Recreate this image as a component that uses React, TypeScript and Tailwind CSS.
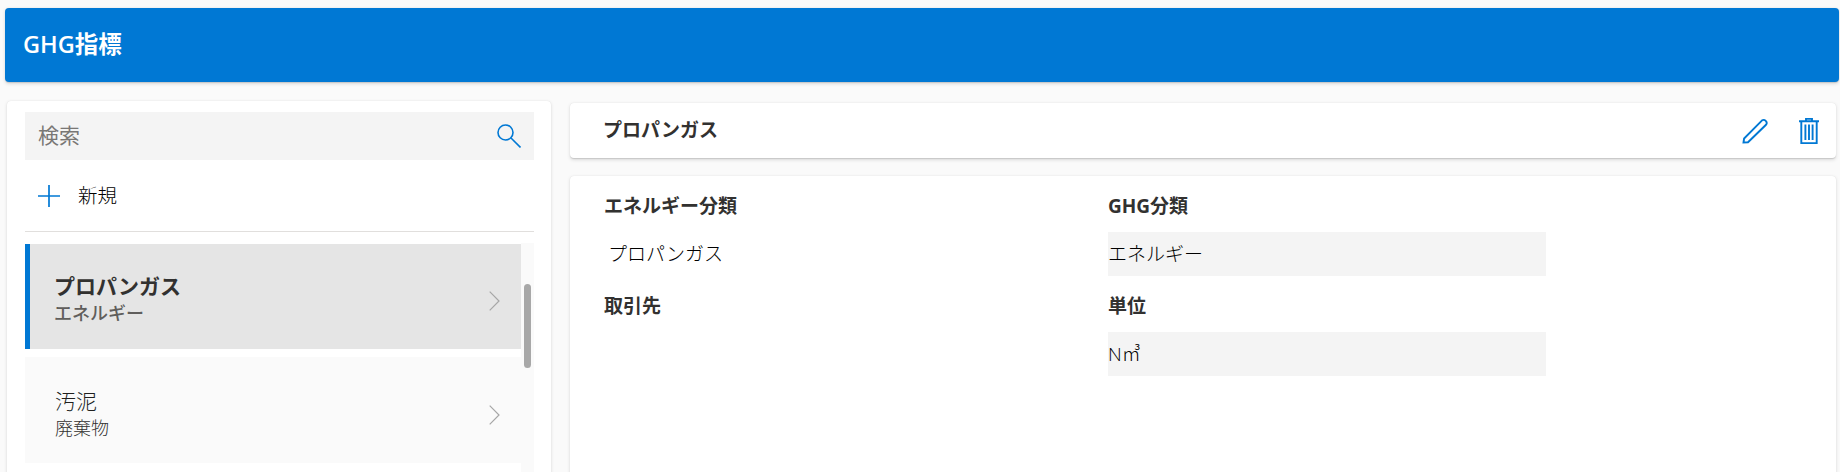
export default function App() {
  const font = { fontFamily: '"Open Sans","Noto Sans CJK JP",sans-serif' };
  const depth = "shadow-[0_1.6px_3.6px_rgba(0,0,0,0.13),0_0.3px_0.9px_rgba(0,0,0,0.11)]";
  return (
    <div style={font} className="h-[472px] w-[1840px] overflow-hidden bg-[#fafafa] pt-2 text-[#323130]">
      <header className={`ml-[5px] mr-px flex h-[74px] items-center rounded bg-[#0078d4] pl-[18px] text-[23.5px] font-semibold text-white ${depth}`}>
        GHG指標
      </header>
      <div className="flex">
        <aside className={`ml-[7px] mt-[19px] h-[500px] w-[544px] shrink-0 rounded bg-white pl-[18px] pr-[17px] pt-[11px] ${depth}`}>
          <div className="flex h-12 items-center justify-between bg-[#f4f4f4] pl-[13px] pr-[13px]">
            <span className="text-[21px] font-normal text-[#797775]">検索</span>
            <svg width="24" height="24" viewBox="0 0 24 24" fill="none" stroke="#0078d4" strokeWidth="1.6">
              <circle cx="8.5" cy="8.5" r="7.5" />
              <path d="M14 14l9.5 9.5" />
            </svg>
          </div>
          <div className="flex h-[72px] items-center border-b border-[#e1dfdd] pl-[13px]">
            <svg width="22" height="22" viewBox="0 0 22 22" fill="none" stroke="#0078d4" strokeWidth="1.7">
              <path d="M11 0v22M0 11h22" />
            </svg>
            <span className="ml-[18px] text-[19.5px] font-light text-[#000000]">新規</span>
          </div>
          <div className="mt-[11px] flex">
            <div className="w-[496px] shrink-0 pt-px">
              <div className="flex h-[105px] items-center justify-between border-l-[5px] border-[#0078d4] bg-[#e5e5e5] pl-[24px] pr-[21px] pt-[9px]">
                <div className="mb-[4px]">
                  <div className="text-[21px] font-semibold leading-[29px] text-[#323130]">プロパンガス</div>
                  <div className="text-[18px] font-medium leading-[25px] text-[#605e5c]">エネルギー</div>
                </div>
                <Chevron />
              </div>
              <div className="mt-2 flex h-[106px] items-center justify-between bg-[#fafafa] pl-[30px] pr-[21px] pt-[10px]">
                <div className="mb-[3px]">
                  <div className="text-[21px] font-light leading-[29px] text-[#201f1e]">汚泥</div>
                  <div className="text-[18px] font-light leading-[25px] text-[#323130]">廃棄物</div>
                </div>
                <Chevron />
              </div>
            </div>
            <div className="h-[300px] w-[13px] shrink-0 bg-[#fafafa] pl-[3px] pt-[41px]">
              <div className="h-[84px] w-[7px] rounded-[4px] bg-[#a8a8a8]" />
            </div>
          </div>
        </aside>
        <main className="ml-[19px] mr-1 mt-[21px] min-w-0 flex-1">
          <div className={`flex h-[55px] items-center justify-between rounded bg-white pl-[33px] pr-[17px] ${depth}`}>
            <span className="text-[19px] font-bold">プロパンガス</span>
            <div className="flex items-center gap-[31px]">
              <svg width="26" height="26" viewBox="0 0 26 26" fill="none" stroke="#0078d4" strokeWidth="1.9">
                <path d="M1.5 24.5l.6-4L19.8 2.6a3 3 0 0 1 4.2 4.2L6 24.3z" />
              </svg>
              <svg width="20" height="26" viewBox="0 0 20 26" fill="none" stroke="#0078d4" strokeWidth="1.9">
                <path d="M0 3.2h20M7 3V.9h6V3M2.3 3.2v21.9h15.4V3.2M6.4 6.5v15.5M10 6.5v15.5M13.6 6.5v15.5" />
              </svg>
            </div>
          </div>
          <div className={`mt-[18px] grid h-[400px] grid-cols-[504px_438px] content-start gap-y-[14px] rounded bg-white pl-[34px] pt-[14px] ${depth}`}>
            <Field label="エネルギー分類"><div className="flex h-11 items-center pl-[4px] text-[19px] font-light text-[#000000]">プロパンガス</div></Field>
            <Field label="GHG分類"><div className="flex h-11 items-center bg-[#f4f4f4] text-[19px] font-light text-[#000000]">エネルギー</div></Field>
            <Field label="取引先"><div className="h-11" /></Field>
            <Field label="単位"><div className="flex h-11 items-center bg-[#f4f4f4] text-[19px] font-light text-[#000000]">N㎥</div></Field>
          </div>
        </main>
      </div>
    </div>
  );
}

function Field({ label, children }: { label: string; children: React.ReactNode }) {
  return (
    <div>
      <div className="mb-[10px] h-8 text-[19px] font-bold leading-8">{label}</div>
      {children}
    </div>
  );
}

function Chevron() {
  return (
    <svg width="11" height="20" viewBox="0 0 11 20" fill="none" stroke="#a6a6a6" strokeWidth="1.2">
      <path d="M.7 .7l9.3 9.3-9.3 9.3" />
    </svg>
  );
}
